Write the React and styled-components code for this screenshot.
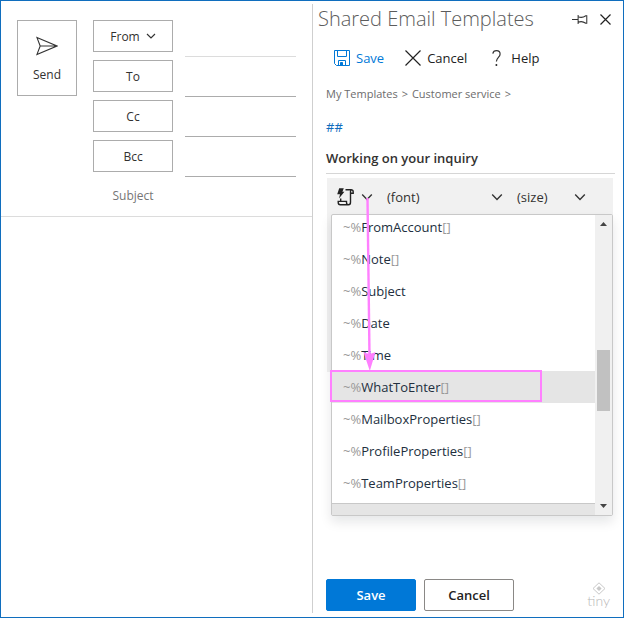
import React, { useState } from 'react';
import styled, { createGlobalStyle } from 'styled-components';

const GlobalStyle = createGlobalStyle`
  * {
    box-sizing: border-box;
  }

  body {
    margin: 0;
    background: #fff;
    color: #323130;
    font-family: 'Open Sans', 'Noto Sans', sans-serif;
    font-size: 13px;
  }

  button, input, select {
    font: inherit;
    color: inherit;
  }

  button {
    padding: 0;
    border: 0;
    background: none;
  }

  svg {
    display: block;
    flex: none;
  }
`;

const Window = styled.div`
  display: grid;
  grid-template-columns: 1fr 1fr;
  min-height: 100vh;
  padding: 3px 0 4px;
  border: 1px solid #106ebe;
`;

/* compose side */

const Compose = styled.form`
  display: flex;
  align-items: flex-start;
  align-self: start;
  gap: 16px;
  padding: 16px 16px 0;
  border-bottom: 1px solid #dcdcdc;
  font-size: 12px;
`;

const SendButton = styled.button`
  display: flex;
  flex-direction: column;
  align-items: center;
  justify-content: center;
  gap: 11px;
  flex: none;
  width: 60px;
  height: 76px;
  padding-top: 2px;
  border: 1px solid #acacac;
  line-height: 16px;
`;

const Fields = styled.div`
  flex: 1;
  min-width: 0;
`;

const FieldRow = styled.div`
  display: grid;
  grid-template-columns: 80px 1fr;
  column-gap: 12px;
  align-items: start;
  height: ${(p) => (p.$last ? 36 : 40)}px;
`;

const FieldButton = styled.button`
  display: flex;
  align-items: center;
  justify-content: center;
  gap: 6px;
  height: 32px;
  border: 1px solid #acacac;
`;

const FieldLabel = styled.label`
  color: #767676;
  line-height: 32px;
  text-align: center;
`;

const FieldInput = styled.input`
  width: 100%;
  min-width: 0;
  height: 37px;
  padding: 0;
  border: 0;
  border-bottom: 1px solid ${(p) => p.$line || 'transparent'};
  outline: 0;
  background: none;
`;

/* templates side */

const Pane = styled.section`
  display: flex;
  flex-direction: column;
  min-width: 0;
  border-left: 1px solid #cfcfcf;
`;

const TitleBar = styled.header`
  display: flex;
  align-items: center;
  height: 30px;
  padding: 0 12px 0 5px;
`;

const Title = styled.h1`
  flex: 1;
  margin: 0;
  color: #5c5c5c;
  font-size: 20px;
  font-weight: 300;
  line-height: 28px;
  white-space: nowrap;
`;

const WindowButton = styled.button`
  margin-left: 12px;
`;

const Commands = styled.nav`
  display: flex;
  align-items: center;
  gap: 21px;
  height: 48px;
  padding-left: 21px;
`;

const Command = styled.button`
  display: flex;
  align-items: center;
  gap: 6px;
  color: ${(p) => (p.$primary ? '#0078d7' : '#222')};
`;

const Body = styled.div`
  display: flex;
  flex: 1;
  flex-direction: column;
  padding: 0 8px 2px 13px;
`;

const Crumbs = styled.nav`
  display: flex;
  gap: 4px;
  height: 24px;
  color: #6c6c6c;
  font-size: 11px;
  line-height: 24px;

  a {
    color: inherit;
    text-decoration: none;
  }
`;

const Shortcut = styled.a`
  color: #0f6cbd;
  line-height: 42px;
  text-decoration: none;
`;

const TemplateName = styled.h2`
  margin: 0 0 4px;
  padding-bottom: 5px;
  border-bottom: 1px solid #d6d6d6;
  font-size: 13px;
  font-weight: 600;
  line-height: 20px;
`;

const Editor = styled.div`
  position: relative;
  height: 194px;
  margin: 0 2px 0 1px;
  background: #f1f1f1;
`;

const Toolbar = styled.div`
  display: flex;
  align-items: center;
  gap: 14px;
  height: 38px;
  padding: 0 27px 0 10px;
`;

const MacroButton = styled.button`
  display: flex;
  align-items: center;
  gap: 7px;
`;

const Picker = styled.label`
  display: grid;
  grid-template-columns: 1fr 12px;
  align-items: center;
  flex: ${(p) => (p.$grow ? '1' : '0 0 69px')};
  min-width: 0;

  select {
    grid-area: 1 / 1 / 2 / 3;
    width: 100%;
    padding: 0;
    border: 0;
    background: none;
    line-height: 20px;
    appearance: none;
  }

  svg {
    grid-area: 1 / 2;
    pointer-events: none;
  }
`;

const Menu = styled.div`
  position: absolute;
  top: 36px;
  right: 0;
  left: 4px;
  display: grid;
  grid-template-columns: 1fr 17px;
  border: 1px solid #c8c8c8;
  border-radius: 2px;
  background: #fff;
  box-shadow: 0 6px 12px rgba(0, 20, 30, 0.1);
`;

const MacroList = styled.ul`
  display: flex;
  flex-direction: column;
  justify-content: flex-end;
  height: 288px;
  margin: 0;
  padding: 0 0 4px;
  overflow: hidden;
  list-style: none;
`;

const MacroItem = styled.li`
  flex: none;
  background: ${(p) => (p.$active ? '#e5e5e5' : 'transparent')};

  button {
    width: 100%;
    height: 32px;
    padding: 0 11px;
    color: #222f3e;
    text-align: left;
  }

  span {
    color: #999;
  }
`;

const MenuFooter = styled.div`
  height: 12px;
  border-top: 1px solid #c8c8c8;
  background: #e5e5e5;
`;

const ScrollTrack = styled.div`
  display: flex;
  flex-direction: column;
  align-items: center;
  grid-area: 1 / 2 / 3 / 3;
  padding: 7px 0;
  background: #f0f0f0;
`;

const ScrollThumb = styled.div`
  width: 13px;
  height: 61px;
  margin: 124px 0 auto;
  background: #c1c1c1;
`;

const Highlight = styled.div`
  position: absolute;
  top: 192px;
  left: 3px;
  width: 212px;
  height: 32px;
  border: 2px solid #ff80ff;
  pointer-events: none;
`;

const Pointer = styled.svg`
  position: absolute;
  top: 20px;
  left: 34px;
  pointer-events: none;
`;

const Footer = styled.footer`
  display: flex;
  align-items: flex-end;
  gap: 8px;
  margin-top: auto;
`;

const FooterButton = styled.button`
  width: 90px;
  height: 32px;
  border: 1px solid ${(p) => (p.$primary ? '#0078d7' : '#8a8886')};
  border-radius: 2px;
  background: ${(p) => (p.$primary ? '#0078d7' : '#fff')};
  color: ${(p) => (p.$primary ? '#fff' : '#222')};
  font-weight: 600;
`;

const Brand = styled.div`
  display: flex;
  flex-direction: column;
  align-items: center;
  margin: 0 5px 4px auto;
  color: #b8b8b8;
  font-family: Lato, sans-serif;
  font-size: 14px;
  font-weight: 300;
  line-height: 12px;
`;

const Chevron = ({ size = 12 }) => (
  <svg width={size} height={size} viewBox='0 0 12 12' fill='none' stroke='#333' strokeWidth='1.4'>
    <path d='M1.2 3.6 6 8.4l4.8-4.8' />
  </svg>
);

const SendIcon = () => (
  <svg width='22' height='20' viewBox='0 0 22 20' fill='none' stroke='#333' strokeWidth='1.1'>
    <path d='M.9 1.4 21 10 .9 18.6 4.2 10zM4.2 10H21' />
  </svg>
);

const PinIcon = () => (
  <svg width='16' height='11' viewBox='0 0 17 11' fill='none' stroke='#333' strokeWidth='1.1'>
    <path d='M0 5.5h6.5M6.5.8v9.4M6.5 2.4c2.4 1.3 5 1.3 8.2-.9h1v8h-1c-3.200-2.200-5.800-2.200-8.200-.9' />
  </svg>
);

const CloseIcon = ({ size }) => (
  <svg width={size} height={size} viewBox={`0 0 ${size} ${size}`} stroke='#222' strokeWidth='1.2'>
    <path d={`M.5.5l${size - 1} ${size - 1}M${size - 0.5}.5l-${size - 1} ${size - 1}`} />
  </svg>
);

const SaveIcon = () => (
  <svg width='16' height='16' viewBox='0 0 16 16' fill='none' stroke='#0078d7'>
    <path d='M.5.5h15v15h-13l-2-2zM3.500.500v6h9v-6M4.500 15.500v-5h7v5' />
    <path d='M6.500 12.500h2v3h-2z' fill='#0078d7' />
  </svg>
);

const HelpIcon = () => (
  <svg width='17' height='17' viewBox='-4 0 17 17' fill='none' stroke='#333' strokeWidth='1.2'>
    <path d='M.8 3.600C1.200 1.600 2.700.700 4.500.700c2.200 0 3.600 1.300 3.600 3.200 0 3.400-3.700 3.500-3.700 7.700' />
    <path d='M4.400 14v2' strokeWidth='1.600' />
  </svg>
);

const MacroIcon = () => (
  <svg width='17' height='18' viewBox='0 0 17 18' fill='none' stroke='#222' strokeWidth='1.4'>
    <path d='M2.200.2h4.600L5.400 3.800h2L2 10.600l1-4.400H.2z' fill='#222' stroke='none' />
    <path d='M8.500 1.700h5.300c1.600 0 2.400.8 2.400 2v1.500h-2.700M13.500 5.200V3.500c0-1 .3-1.800 1-1.800M13.500 5v9.300c0 1.600-.8 2.500-2 2.500H3.200c-1.400 0-2-.9-2-2.500v-.9h8.300v1.200c0 1.300.7 2.200 2 2.200M3.700 10.500v3' />
  </svg>
);

const Triangle = ({ up }) => (
  <svg width='7' height='4' viewBox='0 0 7 4' fill='#444'>
    <path d={up ? 'M0 4 3.500 0 7 4z' : 'M0 0h7L3.500 4z'} />
  </svg>
);

const BrandIcon = () => (
  <svg width='14' height='13' viewBox='0 0 14 13' fill='none' stroke='#c8c8c8'>
    <path d='M7 .8 13 6.500 7 12.200 1 6.500z' />
    <path d='M7 4 9.600 6.500 7 9 4.400 6.500z' fill='#c8c8c8' stroke='none' />
  </svg>
);

const macros = [
  { name: 'FromAccount', args: true },
  { name: 'Note', args: true },
  { name: 'Subject' },
  { name: 'Date' },
  { name: 'Time' },
  { name: 'WhatToEnter', args: true },
  { name: 'MailboxProperties', args: true },
  { name: 'ProfileProperties', args: true },
  { name: 'TeamProperties', args: true },
];

const ComposePane = () => (
  <div>
    <Compose onSubmit={(e) => e.preventDefault()}>
      <SendButton type='submit'>
        <SendIcon />
        Send
      </SendButton>
      <Fields>
        <FieldRow>
          <FieldButton type='button'>
            From <Chevron size={10} />
          </FieldButton>
          <FieldInput aria-label='From' $line='#dcdcdc' />
        </FieldRow>
        {['To', 'Cc', 'Bcc'].map((name) => (
          <FieldRow key={name}>
            <FieldButton type='button'>{name}</FieldButton>
            <FieldInput aria-label={name} $line='#acacac' />
          </FieldRow>
        ))}
        <FieldRow $last>
          <FieldLabel htmlFor='subject'>Subject</FieldLabel>
          <FieldInput id='subject' />
        </FieldRow>
      </Fields>
    </Compose>
  </div>
);

const MacroMenu = () => {
  const [active, setActive] = useState('WhatToEnter');

  return (
    <Menu>
      <MacroList>
        {macros.map(({ name, args }) => (
          <MacroItem key={name} $active={name === active}>
            <button type='button' onClick={() => setActive(name)}>
              <span>~%</span>
              {name}
              {args && <span>[]</span>}
            </button>
          </MacroItem>
        ))}
      </MacroList>
      <MenuFooter />
      <ScrollTrack>
        <Triangle up />
        <ScrollThumb />
        <Triangle />
      </ScrollTrack>
    </Menu>
  );
};

const TemplatesPane = () => (
  <Pane>
    <TitleBar>
      <Title>Shared Email Templates</Title>
      <WindowButton aria-label='Pin'>
        <PinIcon />
      </WindowButton>
      <WindowButton aria-label='Close'>
        <CloseIcon size={11} />
      </WindowButton>
    </TitleBar>
    <Commands>
      <Command $primary>
        <SaveIcon />
        Save
      </Command>
      <Command>
        <CloseIcon size={16} />
        Cancel
      </Command>
      <Command>
        <HelpIcon />
        Help
      </Command>
    </Commands>
    <Body>
      <Crumbs>
        <a href='#templates'>My Templates</a>
        <span>&gt;</span>
        <a href='#service'>Customer service</a>
        <span>&gt;</span>
      </Crumbs>
      <Shortcut href='#shortcut'>##</Shortcut>
      <TemplateName>Working on your inquiry</TemplateName>
      <Editor>
        <Toolbar>
          <MacroButton aria-label='Insert macro'>
            <MacroIcon />
            <Chevron />
          </MacroButton>
          <Picker $grow>
            <select aria-label='Font'>
              <option>(font)</option>
            </select>
            <Chevron />
          </Picker>
          <Picker>
            <select aria-label='Font size'>
              <option>(size)</option>
            </select>
            <Chevron />
          </Picker>
        </Toolbar>
        <MacroMenu />
        <Highlight />
        <Pointer width='16' height='174' viewBox='0 0 16 174'>
          <path d='M6.500 0 8.500 158' stroke='#ff80ff' strokeWidth='2.400' />
          <path d='M2.500 154q6 3.500 12 0L8.800 173z' fill='#ff80ff' />
        </Pointer>
      </Editor>
      <Footer>
        <FooterButton $primary>Save</FooterButton>
        <FooterButton>Cancel</FooterButton>
        <Brand>
          <BrandIcon />
          tiny
        </Brand>
      </Footer>
    </Body>
  </Pane>
);

const App = () => (
  <>
    <GlobalStyle />
    <Window>
      <ComposePane />
      <TemplatesPane />
    </Window>
  </>
);

export default App;
